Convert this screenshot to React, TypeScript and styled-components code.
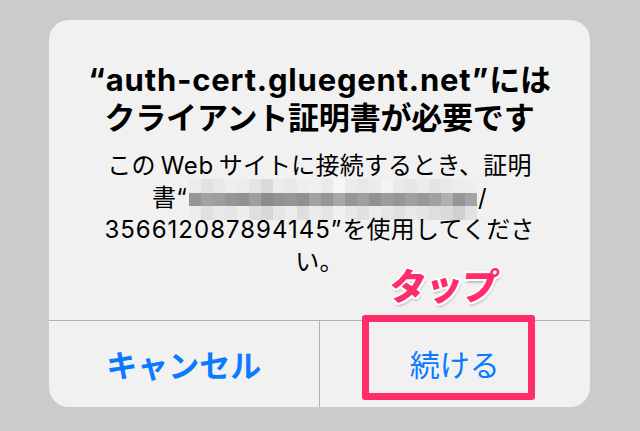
import React from "react";
import styled, { createGlobalStyle } from "styled-components";

const Global = createGlobalStyle`
  html, body { margin: 0; padding: 0; background: #cbcbcb; }
  body { font-family: "Inter", "Noto Sans CJK JP", sans-serif; }
`;

const Page = styled.div`
  width: 640px;
  height: 431px;
  box-sizing: border-box;
  padding: 20px 50px 24px 49px;
  display: flex;
`;

const Dialog = styled.div`
  position: relative;
  flex: 1;
  background: #f1f1f1;
  border-radius: 20px;
  display: flex;
  flex-direction: column;
`;

const Content = styled.div`
  height: 300px;
  box-sizing: border-box;
  padding-top: 41px;
  display: flex;
  flex-direction: column;
  align-items: center;
  text-align: center;
  color: #000;
`;

const Title = styled.div`
  font-size: 31px;
  font-weight: 700;
  line-height: 38px;
  letter-spacing: -0.2px;
`;

const Latin = styled.span<{ $spacing: number }>`
  letter-spacing: ${(p) => p.$spacing}px;
`;

const Message = styled.div`
  margin-top: 13px;
  font-size: 24px;
  line-height: 32px;
  letter-spacing: 0.2px;
`;

const Gap = styled.span`
  display: inline-block;
  width: 5px;
`;

const Mosaic = styled.span`
  display: inline-grid;
  grid-template-columns: repeat(24, 12px);
  grid-auto-rows: 13.7px;
  vertical-align: middle;
  margin: -11px 1px -11px 2px;
`;

const Cell = styled.span<{ $g: number }>`
  background: rgb(${(p) => p.$g}, ${(p) => p.$g}, ${(p) => p.$g});
`;

const Buttons = styled.div`
  flex: 1;
  display: grid;
  grid-template-columns: 1fr 1fr;
  border-top: 1px solid #b2b2b2;
`;

const Button = styled.div<{ $bold?: boolean; $divider?: boolean }>`
  display: flex;
  align-items: center;
  justify-content: center;
  color: #0a7aff;
  font-size: ${(p) => (p.$bold ? "31px" : "30px")};
  font-weight: ${(p) => (p.$bold ? 700 : 400)};
  border-right: ${(p) => (p.$divider ? "1px solid #b2b2b2" : "none")};
  padding-bottom: 2px;
`;

const Highlight = styled.div`
  position: absolute;
  left: 313px;
  top: 295px;
  width: 173px;
  height: 85px;
  box-sizing: border-box;
  border: 7px solid #ff2d6b;
  border-radius: 3px;
`;

const TapLabel = styled.div`
  position: absolute;
  left: 341px;
  top: 246px;
  font-family: "Noto Sans CJK JP", sans-serif;
  font-size: 37px;
  font-weight: 900;
  line-height: 1;
  color: #ff2d6b;
  letter-spacing: -1px;
  transform: skewX(-6deg);
  text-shadow:
    2px 0 0 #fff, -2px 0 0 #fff, 0 2px 0 #fff, 0 -2px 0 #fff,
    1.5px 1.5px 0 #fff, -1.5px 1.5px 0 #fff, 1.5px -1.5px 0 #fff, -1.5px -1.5px 0 #fff,
    1px 3px 3px rgba(0, 0, 0, 0.35);
`;

const rows = [
  [236, 226, 232, 238, 236, 228, 218, 236, 232, 238, 240, 234, 246, 236, 232, 236, 244, 234, 230, 236, 228, 232, 236, 238],
  [150, 162, 158, 150, 146, 158, 140, 146, 150, 144, 162, 150, 168, 150, 158, 146, 156, 150, 160, 152, 160, 176, 150, 164],
  [236, 224, 232, 230, 238, 222, 216, 230, 236, 222, 234, 228, 240, 232, 226, 236, 230, 224, 232, 228, 222, 218, 208, 226],
];

export default function App() {
  return (
    <>
      <Global />
      <Page>
        <Dialog>
          <Content>
            <Title>
              <Latin $spacing={0.8}>“auth-cert.gluegent.net”</Latin>には
              <br />
              クライアント証明書が必要です
            </Title>
            <Message>
              この<Gap />
              <Latin $spacing={0.6}>Web</Latin>
              <Gap />サイトに接続するとき、証明
              <br />
              書“
              <Mosaic>
                {rows.flatMap((r, i) => r.map((g, j) => <Cell key={`${i}-${j}`} $g={g} />))}
              </Mosaic>
              /
              <br />
              <Latin $spacing={1}>356612087894145”</Latin>を使用してくださ
              <br />
              い。
            </Message>
          </Content>
          <Buttons>
            <Button $bold $divider>キャンセル</Button>
            <Button>続ける</Button>
          </Buttons>
          <TapLabel>タップ</TapLabel>
          <Highlight />
        </Dialog>
      </Page>
    </>
  );
}
